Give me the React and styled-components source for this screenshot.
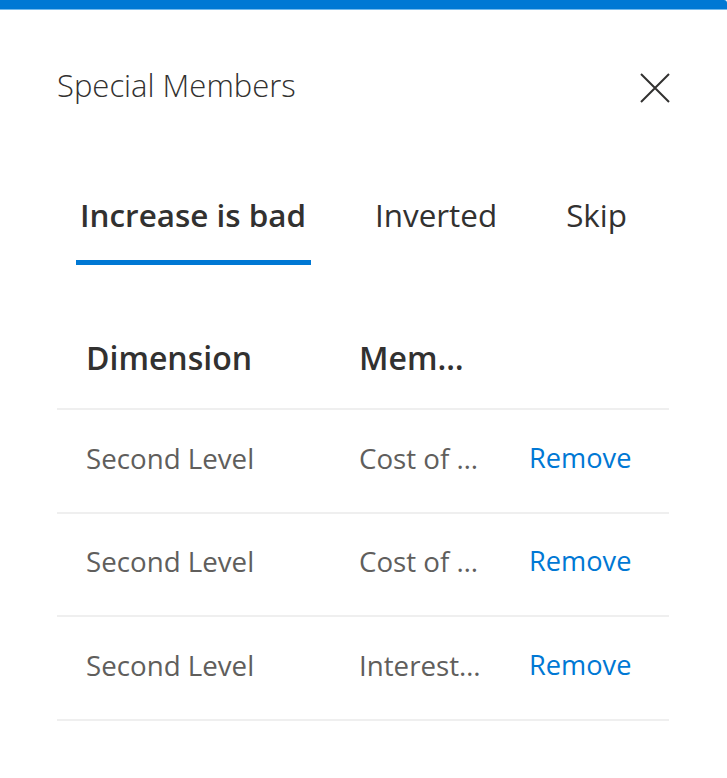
import React from 'react'
import styled, { createGlobalStyle } from 'styled-components'

const Global = createGlobalStyle`
  html, body { margin: 0; padding: 0; background: #fff; }
  body { font-family: "Open Sans", "Noto Sans", sans-serif; color: #323130; }
`;

const Panel = styled.div`
  width: 727px;
  height: 778px;
  background: #fff;
  overflow: hidden;
`;

const TopBar = styled.div`
  height: 9px;
  background: #0078d4;
  border-bottom: 1px solid #74b9ec;
  border-top-right-radius: 3px;
`;

const Body = styled.div`
  padding: 55px 58px 0 57px;
`;

const Header = styled.div`
  display: flex;
  justify-content: space-between;
  align-items: flex-start;
  height: 40px;
`;

const Title = styled.h1`
  margin: 0;
  font-size: 31px;
  line-height: 40px;
  font-weight: 300;
  color: #323130;
`;

const Close = styled.button`
  border: 0;
  background: none;
  padding: 0;
  margin: 8px -1px 0 0;
  width: 30px;
  height: 30px;
  cursor: pointer;
  display: flex;
`;

const Tabs = styled.div`
  display: flex;
  gap: 60px;
  margin: 88px 0 0 19px;
`;

const Tab = styled.div`
  font-size: 31.4px;
  line-height: 44px;
  padding: 0 5px 23px 4px;
  font-weight: ${p => (p.$active ? 600 : 400)};
  color: #323130;
  border-bottom: 5px solid ${p => (p.$active ? '#0078d4' : 'transparent')};
`;

const Table = styled.div`
  margin-top: 42px;
`;

const Row = styled.div`
  display: grid;
  grid-template-columns: 273px 170px 1fr;
  align-items: center;
  height: 103.4px;
  box-sizing: border-box;
  padding-bottom: ${p => (p.$head ? '0' : '6px')};
  border-bottom: 2px solid #efefef;
`;

const Cell = styled.div`
  padding-left: 29px;
  font-size: ${p => (p.$head ? '32px' : '27.7px')};
  line-height: 44px;
  font-weight: ${p => (p.$head ? 600 : 400)};
  color: ${p => (p.$head ? '#323130' : '#605e5c')};
  white-space: nowrap;
`;

const Link = styled.a`
  font-size: 27.2px;
  line-height: 44px;
  color: #0078d4;
  padding-left: 29px;
  text-decoration: none;
  cursor: pointer;
`;

// member names are shown already truncated, as in the column of the grid
const rows = [
  { dim: 'Second Level', member: 'Cost of …' },
  { dim: 'Second Level', member: 'Cost of …' },
  { dim: 'Second Level', member: 'Interest…' },
];

export default function App() {
  return (
    <Panel>
      <Global />
      <TopBar />
      <Body>
        <Header>
          <Title>Special Members</Title>
          <Close aria-label="Close">
            <svg width="30" height="30" viewBox="0 0 30 30">
              <path d="M1 1 L29 29 M29 1 L1 29" stroke="#323130" strokeWidth="2" fill="none" />
            </svg>
          </Close>
        </Header>
        <Tabs>
          <Tab $active>Increase is bad</Tab>
          <Tab>Inverted</Tab>
          <Tab>Skip</Tab>
        </Tabs>
        <Table>
          <Row $head>
            <Cell $head>Dimension</Cell>
            <Cell $head>Mem…</Cell>
            <div />
          </Row>
          {rows.map((r, i) => (
            <Row key={i}>
              <Cell>{r.dim}</Cell>
              <Cell>{r.member}</Cell>
              <div><Link>Remove</Link></div>
            </Row>
          ))}
        </Table>
      </Body>
    </Panel>
  )
}
